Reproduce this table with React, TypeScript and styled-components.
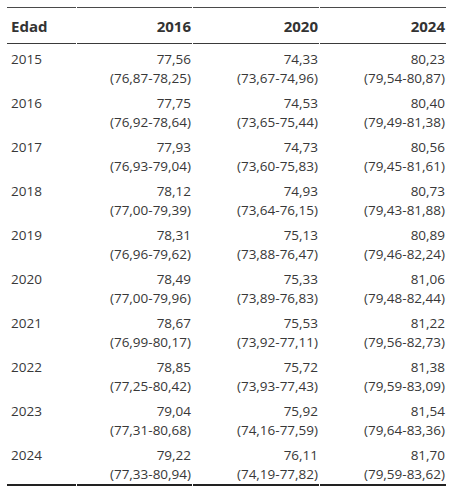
import React from 'react';
import styled, { createGlobalStyle } from 'styled-components';

const GlobalStyle = createGlobalStyle`
  html, body {
    margin: 0;
    padding: 0;
    background: #ffffff;
  }
  body {
    font-family: 'Open Sans', 'Noto Sans', Arial, sans-serif;
    color: #333333;
  }
`;

const Page = styled.div`
  padding: 7px 6px 0 6px;
`;

const Table = styled.table`
  width: 441px;
  border-collapse: separate;
  border-spacing: 1px 0;
  table-layout: fixed;
`;

const HeadCell = styled.th<{ $align?: 'left' | 'right' }>`
  text-align: ${p => p.$align || 'right'};
  font-size: 15px;
  font-weight: 700;
  line-height: 20px;
  color: #333333;
  padding: 8px ${p => (p.$align === 'left' ? '0' : '1px')} 7px ${p => (p.$align === 'left' ? '4px' : '0')};
  border-top: 1px solid #4a4a4a;
  border-bottom: 1px solid #3a3a3a;
`;

const Cell = styled.td<{ $last?: boolean; $align?: 'left' | 'right' }>`
  vertical-align: top;
  text-align: ${p => p.$align || 'right'};
  font-size: 13.5px;
  line-height: 19px;
  color: #383838;
  padding: 6px ${p => (p.$align === 'left' ? '0' : '1px')} 0 ${p => (p.$align === 'left' ? '4px' : '0')};
  height: 38px;
  border-bottom: ${p => (p.$last ? '2px solid #222222' : 'none')};
`;

const Value = styled.div`
  white-space: nowrap;
`;

type Est = [string, string];
type Row = { year: string; cols: Est[] };

const rows: Row[] = [
  { year: '2015', cols: [['77,56', '76,87-78,25'], ['74,33', '73,67-74,96'], ['80,23', '79,54-80,87']] },
  { year: '2016', cols: [['77,75', '76,92-78,64'], ['74,53', '73,65-75,44'], ['80,40', '79,49-81,38']] },
  { year: '2017', cols: [['77,93', '76,93-79,04'], ['74,73', '73,60-75,83'], ['80,56', '79,45-81,61']] },
  { year: '2018', cols: [['78,12', '77,00-79,39'], ['74,93', '73,64-76,15'], ['80,73', '79,43-81,88']] },
  { year: '2019', cols: [['78,31', '76,96-79,62'], ['75,13', '73,88-76,47'], ['80,89', '79,46-82,24']] },
  { year: '2020', cols: [['78,49', '77,00-79,96'], ['75,33', '73,89-76,83'], ['81,06', '79,48-82,44']] },
  { year: '2021', cols: [['78,67', '76,99-80,17'], ['75,53', '73,92-77,11'], ['81,22', '79,56-82,73']] },
  { year: '2022', cols: [['78,85', '77,25-80,42'], ['75,72', '73,93-77,43'], ['81,38', '79,59-83,09']] },
  { year: '2023', cols: [['79,04', '77,31-80,68'], ['75,92', '74,16-77,59'], ['81,54', '79,64-83,36']] },
  { year: '2024', cols: [['79,22', '77,33-80,94'], ['76,11', '74,19-77,82'], ['81,70', '79,59-83,62']] },
];

const App: React.FC = () => {
  return (
    <Page>
      <GlobalStyle />
      <Table>
        <colgroup>
          <col style={{ width: 69 }} />
          <col style={{ width: 115 }} />
          <col style={{ width: 126 }} />
          <col style={{ width: 126 }} />
        </colgroup>
        <thead>
          <tr>
            <HeadCell $align="left">Edad</HeadCell>
            <HeadCell>2016</HeadCell>
            <HeadCell>2020</HeadCell>
            <HeadCell>2024</HeadCell>
          </tr>
        </thead>
        <tbody>
          {rows.map((r, i) => {
            const last = i === rows.length - 1;
            return (
              <tr key={r.year}>
                <Cell $align="left" $last={last}>{r.year}</Cell>
                {r.cols.map(([v, ci], j) => (
                  <Cell key={j} $last={last}>
                    <Value>{v}</Value>
                    <Value>({ci})</Value>
                  </Cell>
                ))}
              </tr>
            );
          })}
        </tbody>
      </Table>
    </Page>
  );
};

export default App;
